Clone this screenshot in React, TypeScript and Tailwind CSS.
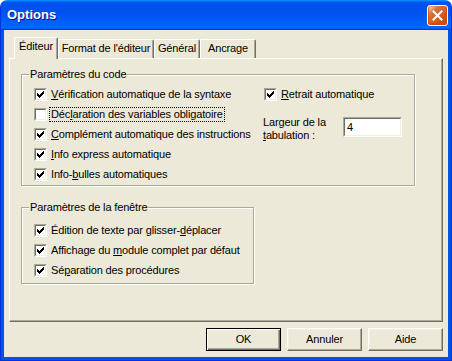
import React from "react";

function Check({ checked }: { checked: boolean }) {
  const ys = [2, 3, 4, 3, 2, 1, 0];
  return (
    <span className="block w-[13px] h-[13px] shrink-0 border border-t-[#ACA899] border-l-[#ACA899] border-r-white border-b-white">
      <span className="block w-[11px] h-[11px] bg-white border border-t-[#716F64] border-l-[#716F64] border-r-[#F1EFE2] border-b-[#F1EFE2]">
        {checked && (
          <svg width="9" height="9" viewBox="0 0 9 9" shapeRendering="crispEdges" className="block">
            {ys.map((y, i) => (
              <rect key={i} x={i + 1} y={y + 1} width="1" height="3" fill="#000" />
            ))}
          </svg>
        )}
      </span>
    </span>
  );
}

function Row({ checked, children, focus }: { checked: boolean; children: React.ReactNode; focus?: boolean }) {
  return (
    <div className="flex items-center h-[20px] gap-[4px]">
      <Check checked={checked} />
      <span className={focus ? "leading-[13px] px-[1px] -ml-[1px] outline-1 outline-dotted outline-black" : "leading-[13px]"}>
        {children}
      </span>
    </div>
  );
}

function Group({ title, className, children }: { title: string; className: string; children: React.ReactNode }) {
  return (
    <div className={"relative border border-[#ACA899] shadow-[inset_1px_1px_0_#fff,1px_1px_0_#fff] " + className}>
      <span className="absolute left-[7px] top-[-7px] px-[1px] bg-[#ECE9D8] leading-[13px] whitespace-nowrap">{title}</span>
      {children}
    </div>
  );
}

function Tab({ label, w, selected }: { label: string; w: string; selected?: boolean }) {
  return (
    <div
      className={
        "flex items-center justify-center bg-[#ECE9D8] border-t border-l border-r border-t-white border-l-white border-r-[#716F64] rounded-t-[2px] shadow-[inset_-1px_0_0_#ACA899] whitespace-nowrap " +
        w +
        (selected ? " h-[22px] -mb-[1px] relative z-10 pb-[4px]" : " h-[19px] pb-[1px]")
      }
    >
      {label}
    </div>
  );
}

function Btn({ label, def }: { label: string; def?: boolean }) {
  return (
    <div
      className={
        "w-[75px] h-[23px] flex items-center justify-center bg-[#ECE9D8] " +
        (def
          ? "border border-black shadow-[inset_1px_1px_0_#fff,inset_-1px_-1px_0_#716F64,inset_-2px_-2px_0_#ACA899]"
          : "border border-t-white border-l-white border-r-[#716F64] border-b-[#716F64] shadow-[inset_-1px_-1px_0_#ACA899,inset_1px_1px_0_#F1EFE2]")
      }
    >
      {label}
    </div>
  );
}

export default function App() {
  return (
    <div className="w-[452px] h-[361px] flex flex-col rounded-t-[7px] overflow-hidden text-[11px] tracking-[-0.15px] text-black [font-family:'Liberation_Sans',Arial,sans-serif]">
      <div className="h-[30px] shrink-0 flex items-center justify-between bg-[linear-gradient(180deg,#0997ff,#0053ee_8%,#0050ee_40%,#0066ff_88%,#0066ff_93%,#005bff_95%,#003dd7_96%,#003dd7)] border-x border-[#0831D9]">
        <span className="pl-[6px] pb-[1px] text-white font-bold text-[13px] tracking-normal [text-shadow:1px_1px_#0f1089]">Options</span>
        <div className="mr-[3px] w-[21px] h-[21px] rounded-[3px] border border-white bg-[radial-gradient(circle_at_90%_90%,#cc4600_0%,#dc6527_55%,#cd7546_70%,#ffccb2_90%,#fff_100%)] shadow-[inset_0_-1px_2px_1px_#da4600] flex items-center justify-center">
          <svg width="11" height="11" viewBox="0 0 11 11">
            <path d="M1.5 1.5 L9.5 9.5 M9.5 1.5 L1.5 9.5" stroke="#fff" strokeWidth="2" strokeLinecap="square" />
          </svg>
        </div>
      </div>
      <div className="flex-1 flex flex-col border-x border-b border-[#0831D9] bg-[#0054E3] px-[3px] pb-[3px]">
        <div className="flex-1 flex flex-col bg-[#ECE9D8] pt-[7px] px-[5px] pb-[6px]">
          <div className="flex items-end h-[21px] ml-[5px]">
            <Tab label="Éditeur" w="w-[44px]" selected />
            <Tab label="Format de l'éditeur" w="w-[96px]" />
            <Tab label="Général" w="w-[46px]" />
            <Tab label="Ancrage" w="w-[56px]" />
          </div>
          <div className="h-[264px] border-t border-l border-t-white border-l-white border-r border-b border-r-[#716F64] border-b-[#716F64] shadow-[inset_-1px_-1px_0_#ACA899] pl-[11px] pt-[15px]">
            <Group title="Paramètres du code" className="w-[394px] h-[112px] flex pt-[9px] pl-[12px]">
              <div className="w-[229px] flex flex-col">
                <Row checked><u>V</u>érification automatique de la syntaxe</Row>
                <Row checked={false} focus>Déc<u>l</u>aration des variables obligatoire</Row>
                <Row checked><u>C</u>omplément automatique des instructions</Row>
                <Row checked><u>I</u>nfo express automatique</Row>
                <Row checked>Info-<u>b</u>ulles automatiques</Row>
              </div>
              <div className="flex flex-col">
                <div className="ml-[1px]">
                  <Row checked><u>R</u>etrait automatique</Row>
                </div>
                <div className="flex items-start mt-[12px]">
                  <div className="w-[80px] leading-[13px]">
                    Largeur de la
                    <br />
                    <u>t</u>abulation :
                  </div>
                  <div className="mt-[1px] w-[59px] h-[20px] border border-t-[#ACA899] border-l-[#ACA899] border-r-white border-b-white">
                    <div className="w-full h-full bg-white border border-t-[#716F64] border-l-[#716F64] border-r-[#F1EFE2] border-b-[#F1EFE2] flex items-center pl-[2px]">
                      4
                    </div>
                  </div>
                </div>
              </div>
            </Group>
            <Group title="Paramètres de la fenêtre" className="mt-[21px] w-[233px] h-[77px] flex flex-col pt-[12px] pl-[12px]">
              <Row checked>Édition de texte par glisser-<u>d</u>éplacer</Row>
              <Row checked>Affichage du <u>m</u>odule complet par défaut</Row>
              <Row checked>Sé<u>p</u>aration des procédures</Row>
            </Group>
          </div>
          <div className="flex justify-end gap-[6px] mt-[6px]">
            <Btn label="OK" def />
            <Btn label="Annuler" />
            <Btn label="Aide" />
          </div>
        </div>
      </div>
    </div>
  );
}
